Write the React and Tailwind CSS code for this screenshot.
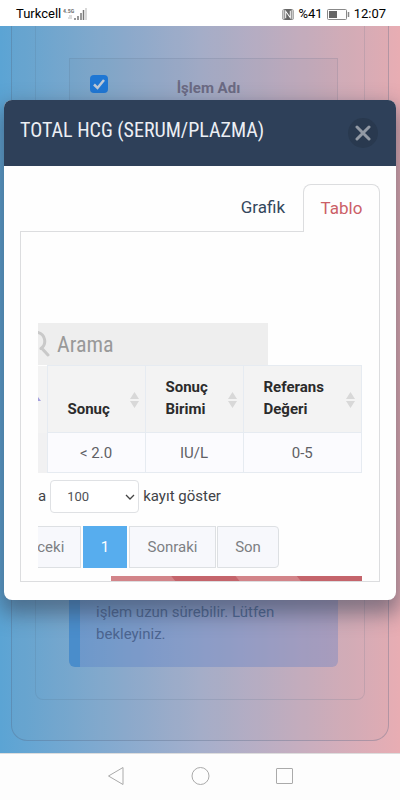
import React from "react";

function StatusBar() {
  return (
    <header className="flex h-[26px] shrink-0 items-center justify-between bg-white pt-0.5 pr-3.5 pl-4 text-[13px] text-black">
      <div className="flex items-center gap-0.5">
        <span>Turkcell</span>
        <svg width="24" height="14" viewBox="0 0 24 14" aria-hidden="true">
          <text x="0" y="6" fontSize="6" fontWeight="700" fill="#777" fontFamily="Roboto Condensed, Roboto, sans-serif">4.5G</text>
          <path d="M5 11h4M6 9h3" stroke="#bbb" />
          <path d="M12 13v-2M15 13V9M18 13V6M20.500 13V3" stroke="#777" strokeWidth="1.500" />
          <path d="M23 13V1" stroke="#ccc" strokeWidth="1.500" />
        </svg>
      </div>
      <div className="flex items-center gap-1">
        <svg width="12" height="13" viewBox="0 0 13 13" aria-hidden="true">
          <rect x="0.5" y="0.5" width="12" height="12" rx="2" fill="#666" />
          <path d="M4 10.500V3l5 7V2.500M2 1v11M11 1v11" fill="none" stroke="#fff" strokeWidth="1.100" />
        </svg>
        <span>%41</span>
        <svg width="23" height="11" viewBox="0 0 23 11" aria-hidden="true">
          <rect x="0.5" y="0.5" width="19" height="10" rx="1" fill="#fff" stroke="#888" />
          <rect x="2" y="2" width="8" height="7" fill="#666" />
          <path d="M21.500 3v5" stroke="#888" strokeWidth="1.500" />
        </svg>
        <span>12:07</span>
      </div>
    </header>
  );
}

function PageBehind() {
  return (
    <div className="flex flex-1 flex-col px-[11px] pb-3">
      <div className="flex flex-1 flex-col rounded-b-2xl border border-t-0 border-[#50648250] bg-[#a0a0a012] px-[23px] pb-10">
        <div className="flex flex-1 flex-col rounded-b-lg border border-t-0 border-[#50648228] pt-8 pr-[26px] pb-8 pl-[33px]">
          <div className="flex h-20 items-start border border-[#50648228] bg-[#5064800c] pt-4">
            <label className="flex w-full items-start">
              <span className="flex w-[58px] shrink-0 justify-center">
                <input type="checkbox" defaultChecked className="peer sr-only" />
                <span className="flex size-[18px] items-center justify-center rounded-sm bg-[#1f77d4]">
                  <svg width="14" height="14" viewBox="0 0 14 14" aria-hidden="true">
                    <path d="M2 7.500l3.500 3.500L12 3" fill="none" stroke="#bfc9d5" strokeWidth="2.500" />
                  </svg>
                </span>
              </span>
              <span className="flex-1 pt-[3px] pr-12 text-center text-[15px] leading-5 font-bold text-[#6b6a83]">İşlem Adı</span>
            </label>
          </div>
          <div className="flex-1" />
          <p className="rounded-md border-l-[11px] border-[#4a8dcb] bg-[#5078c84d] px-4 pt-8 pb-[22px] text-[15px] leading-[22px] text-[#4c6590]">
            işlem uzun sürebilir. Lütfen bekleyiniz.
          </p>
        </div>
      </div>
    </div>
  );
}

function SortIcon() {
  return (
    <svg width="9" height="16" viewBox="0 0 9 16" className="shrink-0" aria-hidden="true">
      <path d="M4.500 0L9 7H0zM4.500 16L0 9h9z" fill="#d8d8d8" />
    </svg>
  );
}

function HeaderCell({ children }) {
  return (
    <th scope="col" className="border border-[#e6ebf1] px-0 pb-3 pl-5 text-left align-bottom font-bold">
      <div className="flex items-end justify-between pr-1.5">
        <span>{children}</span>
        <span className="pb-3"><SortIcon /></span>
      </div>
    </th>
  );
}

function ResultTable() {
  return (
    <table className="w-full table-fixed border-collapse text-[15px] leading-[22px]">
      <colgroup>
        <col className="w-[9px]" />
        <col className="w-[98px]" />
        <col className="w-[98px]" />
        <col />
      </colgroup>
      <thead className="bg-[#f3f3f3] text-[#2b2b2b]">
        <tr className="h-[67px]">
          <th className="border-r border-[#e6ebf1] p-0" aria-label="Sıra">
            <svg width="3" height="4" viewBox="0 0 3 4" aria-hidden="true"><path d="M0 0l3 4H0z" fill="#a39fdd" /></svg>
          </th>
          <HeaderCell>Sonuç</HeaderCell>
          <HeaderCell>Sonuç Birimi</HeaderCell>
          <HeaderCell>Referans Değeri</HeaderCell>
        </tr>
      </thead>
      <tbody className="bg-[#fbfbfe] text-center text-[#5f6064]">
        <tr className="h-10">
          <td className="bg-[#f1f1f2] p-0" />
          <td className="border border-[#e6ebf1]">&lt; 2.0</td>
          <td className="border border-[#e6ebf1]">IU/L</td>
          <td className="border border-[#e6ebf1]">0-5</td>
        </tr>
      </tbody>
    </table>
  );
}

function Pagination() {
  return (
    <nav className="-ml-8 mt-[13px] flex h-[42px] gap-px text-[15px] text-[#7d7f83]" aria-label="Sayfalar">
      <button className="w-[75px] border border-[#dde0e3] bg-[#f7f8fc] pr-1">Önceki</button>
      <button className="ml-px w-11 bg-[#57adee] text-white">1</button>
      <button className="ml-px w-[87px] border border-[#dde0e3] bg-[#f7f8fc]">Sonraki</button>
      <button className="w-[62px] rounded-r border border-[#dde0e3] bg-[#f7f8fc]">Son</button>
    </nav>
  );
}

function ResultDialog() {
  return (
    <section role="dialog" aria-labelledby="dialog-title" className="absolute inset-x-1 top-[74px] overflow-hidden rounded-lg bg-[#fefefe] shadow-[0_10px_20px_4px_rgba(50,60,80,0.500)]">
      <header className="flex h-[66px] items-center justify-between bg-[#2e4059] pr-[18px] pl-4">
        <h1 id="dialog-title" className="pb-1.5 font-['Roboto_Condensed','Liberation_Sans_Narrow',Roboto,sans-serif] text-xl text-[#eceff4]">TOTAL HCG (SERUM/PLAZMA)</h1>
        <button aria-label="Kapat" className="flex size-[30px] items-center justify-center rounded-full bg-[#29394f]">
          <svg width="16" height="16" viewBox="0 0 16 16" aria-hidden="true">
            <path d="M2 2l12 12M14 2L2 14" stroke="#9299a4" strokeWidth="3" strokeLinecap="round" />
          </svg>
        </button>
      </header>
      <div className="px-4 pt-[18px] pb-[18px]">
        <div role="tablist" className="flex h-[47px] justify-end text-[17px]">
          <button role="tab" aria-selected="false" className="px-[18px] text-[#34475c]">Grafik</button>
          <button role="tab" aria-selected="true" className="relative z-10 -mb-px w-[77px] rounded-t-lg border border-b-0 border-[#dcdddf] bg-[#fefefe] text-[#cb5f67]">Tablo</button>
        </div>
        <div role="tabpanel" className="border border-[#dcdddf] px-[17px] pt-[91px]">
          <div className="overflow-hidden">
            <div className="flex h-[42px] w-[230px] items-center bg-[#eeeeee]">
              <svg width="13" height="28" viewBox="0 0 13 28" className="shrink-0" aria-hidden="true">
                <path d="M0 2.500a9 9 0 0 1 3 16M4 18.500l6 6.500" fill="none" stroke="#c9c9c9" strokeWidth="3" strokeLinecap="round" />
              </svg>
              <input aria-label="Arama" placeholder="Arama" className="ml-1.5 min-w-0 flex-1 bg-transparent font-['Roboto_Condensed','Liberation_Sans_Narrow',Roboto,sans-serif] text-[22px] outline-none placeholder:text-[#999999]" />
            </div>
            <ResultTable />
            <label className="mt-[7px] flex h-[33px] items-center text-[15px] text-[#414347]">
              <span>a</span>
              <span className="relative mx-1 flex h-[33px]">
                <select defaultValue="100" className="w-[89px] appearance-none rounded border border-[#dfe1e4] bg-white pl-4 text-[13px] text-[#505257]">
                  <option>100</option>
                </select>
                <svg width="10" height="6" viewBox="0 0 10 6" className="pointer-events-none absolute top-3.5 right-1" aria-hidden="true">
                  <path d="M1 1l4 4 4-4" fill="none" stroke="#444" strokeWidth="1.300" />
                </svg>
              </span>
              <span>kayıt göster</span>
            </label>
            <Pagination />
            <svg height="5" preserveAspectRatio="none" viewBox="0 0 250 5" className="mt-2 ml-[73px] block w-[calc(100%-73px)]" aria-hidden="true">
              <path d="M0 0h250v5H0z" fill="#c4646b" />
              <path d="M0 0h60l4 5H0zM124 0h61l4 5h-61z" fill="#d28489" />
            </svg>
          </div>
        </div>
      </div>
    </section>
  );
}

function NavigationBar() {
  return (
    <nav className="flex h-[47px] shrink-0 items-center justify-center gap-[66px] border-t border-[#dddddd] bg-[#fdfdfd] pb-0.5" aria-label="Sistem">
      <button aria-label="Geri">
        <svg width="18" height="20" viewBox="0 0 18 20" fill="none" stroke="#aaaaaa" aria-hidden="true"><path d="M1.500 10L16 1.500v17z" strokeLinejoin="round" /></svg>
      </button>
      <button aria-label="Ana ekran">
        <svg width="19" height="20" viewBox="0 0 19 20" fill="none" stroke="#aaaaaa" aria-hidden="true"><circle cx="9.500" cy="10" r="8.500" /></svg>
      </button>
      <button aria-label="Son uygulamalar">
        <svg width="17" height="20" viewBox="0 0 17 20" fill="none" stroke="#aaaaaa" aria-hidden="true"><rect x="0.500" y="2.500" width="16" height="15" rx="0.500" /></svg>
      </button>
    </nav>
  );
}

export default function App() {
  return (
    <div className="flex min-h-screen flex-col font-[Roboto,sans-serif]">
      <StatusBar />
      <main className="relative flex flex-1 flex-col overflow-hidden bg-[linear-gradient(to_right,#5ba4d4,#a5afcc_50%,#e8adb3)]">
        <PageBehind />
        <ResultDialog />
      </main>
      <NavigationBar />
    </div>
  );
}
